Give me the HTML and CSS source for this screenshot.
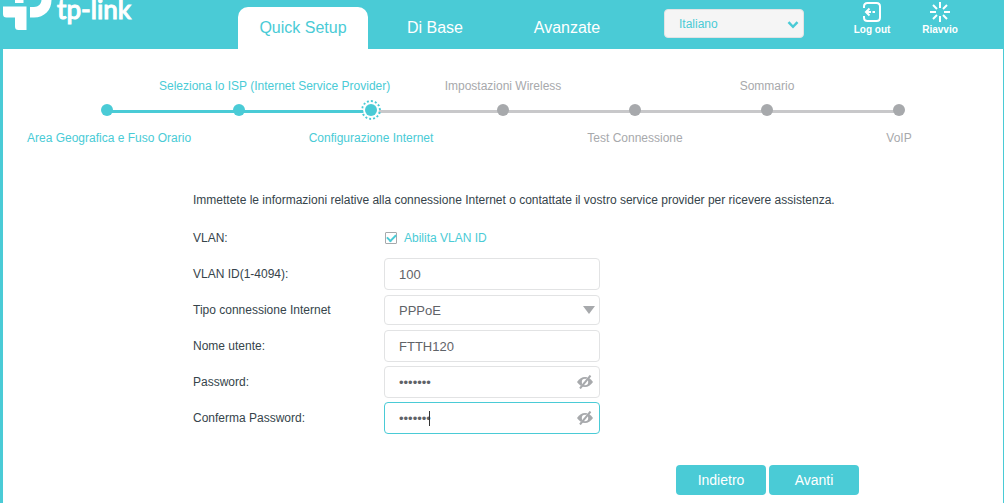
FILE: index.html
```html
<!DOCTYPE html>
<html lang="it">
<head>
  <meta charset="UTF-8">
  <title>TP-Link - Quick Setup</title>
  <link rel="stylesheet" href="styles.css">
</head>
<body>
<header class="top">
  <a class="logo" href="#" aria-label="tp-link">
    <svg class="logo-mark" width="49" height="30" viewBox="0 0 49 30" fill="#fff">
      <path d="M12 0h8.500v3H12z"/>
      <path d="M0 6.500h23.500V30H15.500a3.500 3.500 0 0 1-3.500-3.500V17.500H3.500A3.500 3.500 0 0 1 0 14z"/>
      <path d="M27 17.500V7h4c4.500 0 7.200-3 7.500-7h10C48.500 10 41.500 17.500 31 17.500z"/>
    </svg>
    <span class="logo-name">tp-link</span>
  </a>
  <nav class="tabs">
    <a class="tab active" href="#">Quick Setup</a>
    <a class="tab" href="#">Di Base</a>
    <a class="tab" href="#">Avanzate</a>
  </nav>
  <div class="lang">
    <select aria-label="Lingua">
      <option>Italiano</option>
      <option>English</option>
    </select>
    <svg class="lang-arrow" width="12" height="8" viewBox="0 0 12 8" fill="none" stroke="#4acbd6" stroke-width="2.500"><path d="M1.500 1.200L6 5.800l4.500-4.600"/></svg>
  </div>
  <div class="tools">
    <button class="tool" type="button">
      <svg width="20" height="20" viewBox="0 0 20 20" fill="none" stroke="#fff" stroke-width="2">
        <path d="M2 6V4.500Q2 1 5.500 1h9Q18 1 18 4.500v11q0 3.500-3.500 3.500h-9Q2 19 2 15.500V14"/>
        <path d="M7.500 6.500L4 10l3.500 3.500M4 10h5M10.500 10H13"/>
      </svg>
      Log out
    </button>
    <button class="tool" type="button">
      <svg width="20" height="20" viewBox="0 0 20 20" fill="none" stroke="#fff" stroke-width="2">
        <path d="M10 0v6M10 14v6M0 10h6M14 10h6M3 3l4 4M13 13l4 4M17 3l-4 4M7 13l-4 4"/>
      </svg>
      Riavvio
    </button>
  </div>
</header>

<main class="panel">
  <ol class="steps">
    <li class="step done"><i class="dot"></i><span class="step-name">Area Geografica e Fuso Orario</span></li>
    <li class="step done"><i class="dot"></i><span class="step-name">Seleziona lo ISP (Internet Service Provider)</span></li>
    <li class="step current"><i class="dot"></i><span class="step-name">Configurazione Internet</span></li>
    <li class="step"><i class="dot"></i><span class="step-name">Impostazioni Wireless</span></li>
    <li class="step"><i class="dot"></i><span class="step-name">Test Connessione</span></li>
    <li class="step"><i class="dot"></i><span class="step-name">Sommario</span></li>
    <li class="step"><i class="dot"></i><span class="step-name">VoIP</span></li>
  </ol>

  <form class="setup">
    <p class="intro">Immettete le informazioni relative alla connessione Internet o contattate il vostro service provider per ricevere assistenza.</p>
    <div class="row">
      <span class="label">VLAN:</span>
      <label class="check"><input type="checkbox" checked>Abilita VLAN ID</label>
    </div>
    <div class="row">
      <label class="label" for="vlanId">VLAN ID(1-4094):</label>
      <div class="field"><input type="text" id="vlanId" value="100"></div>
    </div>
    <div class="row">
      <label class="label" for="connType">Tipo connessione Internet</label>
      <div class="field">
        <select id="connType">
          <option>PPPoE</option>
        </select>
        <svg class="field-arrow" width="12" height="8" viewBox="0 0 12 8" fill="#a7a9ac"><path d="M0 0h12L6 8z"/></svg>
      </div>
    </div>
    <div class="row">
      <label class="label" for="user">Nome utente:</label>
      <div class="field"><input type="text" id="user" value="FTTH120"></div>
    </div>
    <div class="row">
      <label class="label" for="pwd">Password:</label>
      <div class="field">
        <input type="password" id="pwd" value="ftth120">
        <button class="eye" type="button" aria-label="Mostra password">
          <svg width="16" height="14" viewBox="0 0 16 14" fill="none" stroke="#a7a9ac">
            <path d="M0 7q3.500-5 8-5t8 5q-3.500 5-8 5T0 7z" fill="#a7a9ac" stroke="none"/>
            <circle cx="8" cy="7" r="3.200" fill="#fff" stroke="none"/>
            <path d="M3.500 12L12 1" stroke="#fff" stroke-width="1"/>
            <path d="M3 13.500L13.500.5" stroke-width="2"/>
          </svg>
        </button>
      </div>
    </div>
    <div class="row">
      <label class="label" for="pwd2">Conferma Password:</label>
      <div class="field">
        <input type="password" id="pwd2" value="ftth120" autofocus>
        <span class="caret"></span>
        <button class="eye" type="button" aria-label="Mostra password">
          <svg width="16" height="14" viewBox="0 0 16 14" fill="none" stroke="#a7a9ac">
            <path d="M0 7q3.500-5 8-5t8 5q-3.500 5-8 5T0 7z" fill="#a7a9ac" stroke="none"/>
            <circle cx="8" cy="7" r="3.200" fill="#fff" stroke="none"/>
            <path d="M3.500 12L12 1" stroke="#fff" stroke-width="1"/>
            <path d="M3 13.500L13.500.5" stroke-width="2"/>
          </svg>
        </button>
      </div>
    </div>
    <div class="buttons">
      <button class="btn" type="button">Indietro</button>
      <button class="btn" type="button">Avanti</button>
    </div>
  </form>
</main>
</body>
</html>
```

FILE: styles.css
```css
* {
  box-sizing: border-box;
}
body {
  margin: 0;
  min-height: 100vh;
  display: flex;
  flex-direction: column;
  background: #4acbd6;
  color: #36444b;
  font-family: Arial, "Liberation Sans", sans-serif;
  font-size: 12px;
}
input, select, button {
  font-family: inherit;
  margin: 0;
}

/* header */
.top {
  display: flex;
  height: 49px;
  padding: 0 30px 0 3px;
}
.logo {
  display: flex;
  align-items: flex-start;
  gap: 5px;
  width: 235px;
  color: #fff;
  text-decoration: none;
}
.logo-name {
  font-family: Lato, sans-serif;
  font-size: 26px;
  font-weight: 500;
  line-height: 18px;
  -webkit-text-stroke: 1px #fff;
}
.tabs {
  display: flex;
  gap: 2px;
  padding-top: 7px;
}
.tab {
  width: 130px;
  line-height: 41px;
  text-align: center;
  font-size: 16px;
  color: #fff;
  text-decoration: none;
  border-radius: 10px 10px 0 0;
}
.tab.active {
  background: #fff;
  color: #4acbd6;
}
.lang {
  position: relative;
  margin: 9px 34px 0 auto;
}
.lang select {
  appearance: none;
  width: 140px;
  height: 29px;
  padding: 0 14px;
  border: 1px solid #e2e3e4;
  border-radius: 4px;
  background: #f5f5f5;
  color: #4acbd6;
  font-size: 12px;
}
.lang-arrow {
  position: absolute;
  right: 5px;
  top: 12px;
}
.tools {
  display: flex;
  padding-top: 2px;
}
.tool {
  display: flex;
  flex-direction: column;
  align-items: center;
  gap: 1px;
  width: 68px;
  padding: 0;
  border: 0;
  background: none;
  color: #fff;
  font-size: 10px;
  font-weight: bold;
  line-height: 14px;
}

/* white page */
.panel {
  flex: 1;
  margin: 0 1px 0 3px;
  background: #fff;
}
.steps {
  display: flex;
  justify-content: center;
  list-style: none;
  margin: 0;
  padding: 29px 0 0;
}
.step {
  position: relative;
  display: flex;
  flex-direction: column;
  align-items: center;
  gap: 14px;
  width: 132px;
  height: 68px;
  padding-top: 26px;
  color: #a7a9ac;
}
.step:nth-child(even) {
  flex-direction: column-reverse;
  justify-content: flex-end;
  gap: 10px;
  padding-top: 0;
}
.step-name {
  width: 160px;
  line-height: 16px;
  text-align: center;
  white-space: nowrap;
}
.dot {
  width: 12px;
  height: 12px;
  border-radius: 50%;
  background: #a7a9ac;
  z-index: 1;
}
.step.done, .step.current {
  color: #4acbd6;
}
.step.done .dot, .step.current .dot {
  background: #4acbd6;
}
.current .dot {
  outline: 2px dotted #4acbd6;
  outline-offset: 2px;
  box-shadow: 0 0 0 2px #fff;
}
.step:not(:last-child)::after {
  content: "";
  position: absolute;
  left: 50%;
  top: 32px;
  width: 100%;
  height: 3px;
  background: #c8c8ca;
}
.step.done::after {
  background: #4acbd6;
}

/* form */
.setup {
  max-width: 712px;
  margin: 0 auto;
  padding: 44px 0 8px 46px;
}
.intro {
  margin: 0 0 12px;
  line-height: 20px;
}
.row {
  display: flex;
  align-items: center;
  height: 32px;
  margin-bottom: 4px;
}
.label {
  width: 191px;
}
.check {
  display: flex;
  align-items: center;
  gap: 7px;
  padding-left: 1px;
  color: #4acbd6;
}
.check input {
  appearance: none;
  display: grid;
  place-items: center;
  width: 12px;
  height: 12px;
  border: 1px solid #a7a9ac;
  border-radius: 1px;
}
.check input:checked::before {
  content: "";
  width: 7px;
  height: 4px;
  margin-bottom: 2px;
  border-left: 2px solid #4acbd6;
  border-bottom: 2px solid #4acbd6;
  transform: rotate(-45deg);
}
.field {
  position: relative;
  display: flex;
  align-items: center;
  width: 216px;
}
.field input, .field select {
  appearance: none;
  width: 100%;
  height: 32px;
  padding: 0 14px;
  border: 1px solid #e2e3e4;
  border-radius: 4px;
  background: #fff;
  color: #5f6368;
  font-size: 13px;
  outline: none;
}
.field select {
  height: 30px;
}
.field input[type="password"] {
  padding-right: 30px;
  caret-color: transparent;
}
.field input:focus {
  border-color: #4acbd6;
}
.field-arrow {
  position: absolute;
  right: 5px;
}
.caret {
  position: absolute;
  left: 45px;
  width: 1px;
  height: 15px;
  background: #333;
}
.eye {
  position: absolute;
  right: 7px;
  display: flex;
  padding: 0;
  border: 0;
  background: none;
}
.buttons {
  display: flex;
  justify-content: flex-end;
  gap: 3px;
  margin-top: 31px;
}
.btn {
  width: 90px;
  height: 30px;
  border: 0;
  border-radius: 4px;
  background: #4acbd6;
  color: #fff;
  font-size: 14px;
}
```
